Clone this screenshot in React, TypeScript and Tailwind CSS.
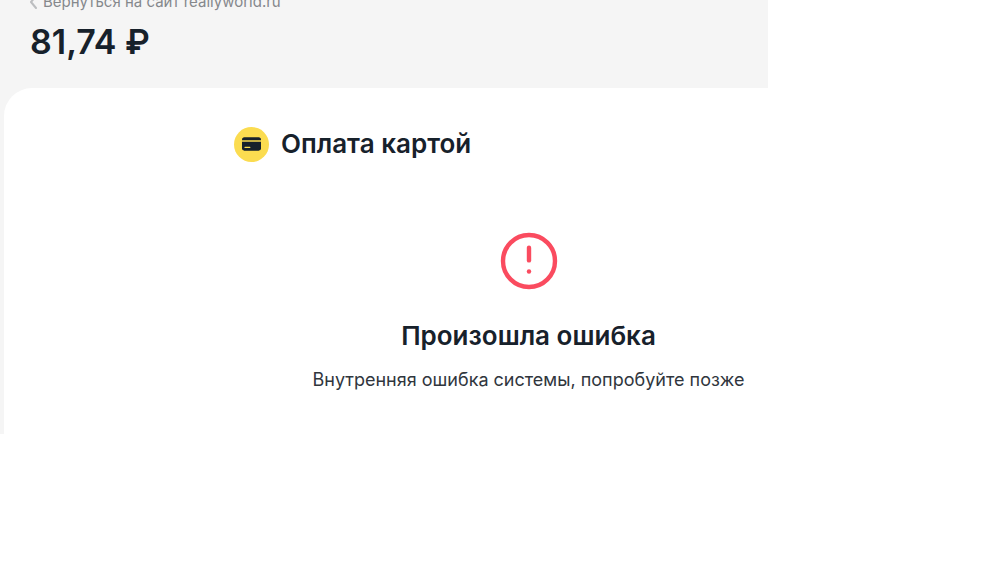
/* ------------------------------------------------------------------ */
/*  Page                                                               */
/* ------------------------------------------------------------------ */

export default function App() {
  return (
    <div className="min-h-screen overflow-hidden bg-white font-['Inter','Liberation_Sans',sans-serif] text-[#17212b]">
      <main className="max-w-3xl bg-[#f5f5f5] pl-1">
        <PaymentHeader amount="81,74 ₽" site="reallyworld.ru" />

        <section className="rounded-tl-[28px] bg-white pt-9 pb-10">
          <div className="flex items-center gap-3 pl-[230px]">
            <CardBadge />
            <h2 className="text-[26px] leading-10 font-semibold">
              Оплата картой
            </h2>
          </div>

          <PaymentError
            title="Произошла ошибка"
            message="Внутренняя ошибка системы, попробуйте позже"
          />
        </section>
      </main>
    </div>
  );
}

/* ── Sub-components ── */

function PaymentHeader({ amount, site }: { amount: string; site: string }) {
  return (
    <header className="-mt-2 pb-6 pl-[26px]">
      <a
        href="#"
        className="flex items-center gap-1.5 text-[15px] leading-5 font-normal text-[#85888c]"
      >
        <svg width="7" height="14" viewBox="0 0 7 14" fill="none">
          <path
            d="M6 1L1 7l5 6"
            stroke="#bcbec0"
            strokeWidth="2"
            strokeLinecap="round"
            strokeLinejoin="round"
          />
        </svg>
        Вернуться на сайт {site}
      </a>
      <h1 className="pt-2 text-[34px] leading-[44px] font-semibold">
        {amount}
      </h1>
    </header>
  );
}

function CardBadge() {
  return (
    <span className="flex size-[35px] shrink-0 items-center justify-center rounded-full bg-[#fbdc50]">
      <svg width="19" height="14" viewBox="0 0 20 14" fill="none">
        <path
          d="M0 3V2.4C0 1 1 0 2.4 0h15.2C19 0 20 1 20 2.4V3z"
          fill="#17212b"
        />
        <path
          d="M0 4.6h20v7c0 1.4-1 2.4-2.4 2.4H2.4C1 14 0 13 0 11.6z"
          fill="#17212b"
        />
        <path
          d="M3.2 10.6h5"
          stroke="#fbdc50"
          strokeWidth="1.3"
          strokeLinecap="round"
        />
      </svg>
    </span>
  );
}

function PaymentError({ title, message }: { title: string; message: string }) {
  return (
    <div className="flex flex-col items-center pt-[68px] pl-[285px] text-center">
      <svg width="58" height="58" viewBox="0 0 58 58" fill="none">
        <circle cx="29" cy="29" r="26" stroke="#fa4b5f" strokeWidth="4.4" />
        <path
          d="M29 15.8v12.6"
          stroke="#fa4b5f"
          strokeWidth="4.4"
          strokeLinecap="round"
        />
        <circle cx="29" cy="39.5" r="2.2" fill="#fa4b5f" />
      </svg>
      <h3 className="pt-7 text-[26px] leading-9 font-semibold">{title}</h3>
      <p className="pt-3 text-lg leading-7 font-normal text-[#30363d]">
        {message}
      </p>
    </div>
  );
}
